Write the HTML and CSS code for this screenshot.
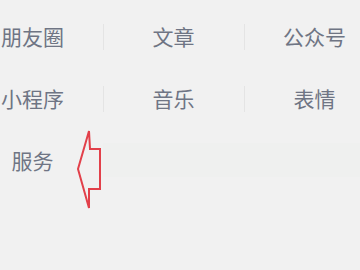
FILE: index.html
```html
<!DOCTYPE html>
<html lang="zh">
<head>
<meta charset="utf-8">
<link rel="stylesheet" href="styles.css">
</head>
<body>
<div class="page">
  <div class="grid">
    <div class="row">
      <div class="cell">朋友圈</div>
      <div class="cell sep">文章</div>
      <div class="cell sep">公众号</div>
    </div>
    <div class="row">
      <div class="cell">小程序</div>
      <div class="cell sep">音乐</div>
      <div class="cell sep">表情</div>
    </div>
    <div class="row row-last">
      <div class="cell">服务</div>
      <div class="cell blank"></div>
      <div class="cell blank"></div>
    </div>
  </div>
  <svg class="arrow" width="40" height="100" viewBox="70 120 40 100" xmlns="http://www.w3.org/2000/svg">
    <polygon points="89,131 90,149 100,149 100,189 89,189 89,208 78,169" fill="none" stroke="#e2404a" stroke-width="2" stroke-linejoin="miter"/>
  </svg>
</div>
</body>
</html>
```

FILE: styles.css
```css
html, body {
  margin: 0;
  padding: 0;
  background: #f1f1f1;
}
.page {
  position: relative;
  width: 360px;
  height: 270px;
  overflow: hidden;
  background: #f1f1f1;
}
.grid {
  display: flex;
  flex-direction: column;
  margin-left: -38px;
  padding-top: 5px;
}
.row {
  display: flex;
  height: 62px;
}
.cell {
  position: relative;
  width: 141px;
  flex: 0 0 141px;
  display: flex;
  align-items: center;
  justify-content: center;
  font-family: "Noto Sans CJK SC", "Noto Sans", sans-serif;
  font-size: 21px;
  color: #6f7584;
}
.sep::before {
  content: "";
  position: absolute;
  left: 0;
  top: 19px;
  width: 1px;
  height: 26px;
  background: #e4e4e4;
}
.row-last .blank {
  align-self: center;
  height: 34px;
  background: #eff0ef;
}
.arrow {
  position: absolute;
  left: 70px;
  top: 120px;
}
```
